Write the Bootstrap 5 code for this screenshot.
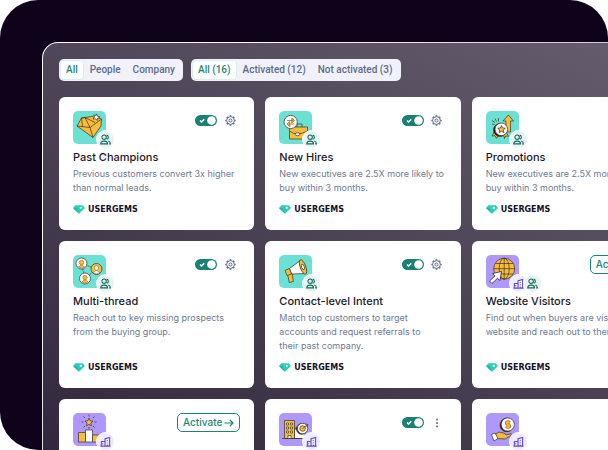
<!DOCTYPE html>
<html lang="en">
<head>
<meta charset="utf-8">
<meta name="viewport" content="width=device-width, initial-scale=1">
<title>UserGems plays</title>
<link href="https://cdn.jsdelivr.net/npm/bootstrap@5.3.0/dist/css/bootstrap.min.css" rel="stylesheet">
<style>
  body { font-family: Inter, "Open Sans", sans-serif; background: #fff; }
  .stage { height: 100vh; background: #0e031b; border-radius: 38px 38px 0 38px; padding: 42px 0 0 42px; }
  /* The board runs past the right and bottom edges of the stage. */
  .board {
    margin-right: -77px; padding: 16px 17px 0 16px; min-height: 0;
    border: 1px solid transparent; border-bottom: 0; border-radius: 16px 16px 0 0;
    background: linear-gradient(27deg, #32283d, #675f6f) padding-box,
                linear-gradient(135deg, #fff 20%, #8b8494) border-box;
  }
  .seg { background: #f1f2f9; border-radius: 5px; padding: 1px 2px 1px 1px; height: 22px; }
  .seg .btn { --bs-btn-padding-x: 5px; --bs-btn-padding-y: 0; --bs-btn-font-size: 10px; --bs-btn-font-weight: 500;
    --bs-btn-font-family: Roboto, sans-serif;
    --bs-btn-line-height: 18px; --bs-btn-border-radius: 4px; --bs-btn-color: #5a6b8c;
    --bs-btn-active-bg: #fff; --bs-btn-active-color: #1b8577; --bs-btn-active-border-color: #d8f0ec; white-space: nowrap; }
  .plays { grid-template-columns: repeat(3, minmax(0, 1fr)); gap: 11px; margin-top: 16px; }
  .play { --bs-card-border-width: 0; --bs-card-border-radius: 6px; padding: 14px 14px 16px; min-height: 133px; }
  .tile { width: 33px; height: 33px; border-radius: 5px; display: block; }
  .teal { background: #6be0d5; }
  .violet { background: #ae98fb; }
  .tags { left: 23px; top: 19px; }
  .tag { width: 19px; height: 19px; border: 1px solid #fff; border-radius: 50%; background: #e7f4f1; color: #14695f; }
  .tag + .tag { margin-left: -5px; }
  .tag.org { background: #f0ecff; color: #6347cc; }
  .controls { height: 19px; gap: 3px; }
  .form-switch .form-check-input.flip {
    width: 22px; height: 11px; margin: 0; border: 0; display: block; float: none; border-radius: 6px; background-color: #cbd2dd;
  }
  .form-switch .form-check-input.flip:checked {
    background-color: #1b8073; background-size: 22px 11px; background-position: 0 0;
    background-image: url("data:image/svg+xml,%3Csvg xmlns='http://www.w3.org/2000/svg' viewBox='0 0 22 11'%3E%3Ccircle cx='16.5' cy='5.5' r='4.3' fill='%23fff'/%3E%3Cpath d='M5 5.5l1.5 1.5L9.300 4.200' fill='none' stroke='%23fff' stroke-width='1.300'/%3E%3C/svg%3E");
  }
  .icon-btn { width: 20px; height: 19px; padding: 0; border: 0; line-height: 0; color: #5b6a86; }
  .go { --bs-btn-color: #1b8577; --bs-btn-border-color: #1b8577; --bs-btn-padding-x: 5px; --bs-btn-padding-y: 0;
    --bs-btn-font-size: 10px; --bs-btn-font-weight: 500; --bs-btn-line-height: 17px; --bs-btn-border-radius: 5px; white-space: nowrap; gap: 2px; }
  .play-title { font-size: 11px; line-height: 16px; font-weight: 500; color: #1b1728; margin: 5px 0 2px; }
  .play-text { font-size: 9px; line-height: 14px; color: #6c7a95; margin: 0 0 10px; }
  .brand { height: 9px; gap: 3px; font: bold 8px/9px "DejaVu Sans", sans-serif; color: #16101f; }
</style>
<script src="https://cdn.jsdelivr.net/npm/bootstrap@5.3.0/dist/js/bootstrap.bundle.min.js"></script>
</head>
<body>
<svg class="d-none" aria-hidden="true">
  <symbol id="people" viewBox="0 0 12 12"><g fill="none" stroke="currentColor" stroke-width="1.200"><circle cx="4.500" cy="3.500" r="2.400"/><path d="M.8 10.800c0-2.200 1.500-3 3.700-3s3.700.8 3.700 3zM7.400 1.200a2.400 2.400 0 0 1 0 4.600M9 7.600c1.500.4 2.300 1.600 2.300 3.200H10"/></g></symbol>
  <symbol id="offices" viewBox="0 0 12 12"><g fill="none" stroke="currentColor" stroke-width="1.200"><path d="M.5 11h11M1.500 11V6H5M5.500 11V3l5-1.500V11M3 8v1"/><path d="M8 4.500v1M8 7v1M8 9.500V11"/></g></symbol>
  <symbol id="gear" viewBox="0 0 11 11"><g fill="none" stroke="currentColor"><circle cx="5.500" cy="5.500" r="3.900"/><circle cx="5.500" cy="5.500" r="1.500"/><path stroke-width="1.700" d="M5.500 .3v1.200M5.500 9.500v1.200M.3 5.500h1.200M9.500 5.500h1.200M1.800 1.800l.9.900M8.300 8.300l.9.900M9.200 1.800l-.9.900M2.700 8.300l-.9.900"/></g></symbol>
  <symbol id="gem" viewBox="0 0 13 9"><path fill="#2bcdbd" d="M2.500 0h8L13 3 6.500 9 0 3z"/><path fill="#1fb5a8" d="M0 3h3.500l3 6z"/><path fill="#fff" d="M7 2.700l1.500-1.500L10 2.700 8.500 4.200z"/></symbol>
</svg>

<main class="stage d-flex flex-column overflow-hidden">
  <section class="board flex-fill">
    <div class="d-flex gap-2">
      <div class="seg d-flex" role="group" aria-label="Audience">
        <button type="button" class="btn active">All</button>
        <button type="button" class="btn">People</button>
        <button type="button" class="btn">Company</button>
      </div>
      <div class="seg d-flex" role="group" aria-label="Status">
        <button type="button" class="btn active">All (16)</button>
        <button type="button" class="btn">Activated (12)</button>
        <button type="button" class="btn">Not activated (3)</button>
      </div>
    </div>

    <div class="plays d-grid">
      <article class="play card">
        <div class="d-flex justify-content-between">
          <div class="position-relative">
            <svg class="tile teal" viewBox="0 0 33 33"><g stroke="#3a3020" stroke-width=".7" stroke-linejoin="round"><path fill="#fbbc3c" d="M4 15l4.500-8L19 5.500 28.500 8 28 15l-8 11.500z"/><path fill="none" d="M4 15l13 1.500L28.500 8M17 16.500l3 10M17 16.500L12 6.500 8.500 7l1 8.500M12 6.500l10 5"/><path fill="#fff" d="M23.500 3l1 2.200 2.500.8-2.200 1.200-.5 2.300-1.600-1.700-2.700.2 1.600-2-.8-2.300 2 1z"/></g></svg>
            <div class="tags position-absolute d-flex"><span class="tag d-flex align-items-center justify-content-center"><svg width="11" height="11"><use href="#people"/></svg></span></div>
          </div>
          <div class="controls d-flex align-items-center"><div class="form-switch p-0 m-0"><input class="form-check-input flip" type="checkbox" role="switch" checked aria-label="Past Champions active"></div><button type="button" class="btn icon-btn" aria-label="Settings"><svg width="11" height="11"><use href="#gear"/></svg></button></div>
        </div>
        <h2 class="play-title">Past Champions</h2>
        <p class="play-text">Previous customers convert 3x higher than normal leads.</p>
        <div class="brand d-flex align-items-center mt-auto"><svg width="12" height="9"><use href="#gem"/></svg>USERGEMS</div>
      </article>

      <article class="play card">
        <div class="d-flex justify-content-between">
          <div class="position-relative">
            <svg class="tile teal" viewBox="0 0 33 33"><g stroke="#3a3020" stroke-width=".7" stroke-linejoin="round"><path fill="none" d="M18 16v-3h5v3"/><path fill="#fbbc3c" d="M10.500 16h18v12h-18z"/><path fill="none" d="M10.500 20q4 3 8 3t10-3"/><ellipse cx="18.500" cy="23.200" rx="2.300" ry="1.500" fill="#fff"/><circle cx="11.700" cy="11" r="6.600" fill="#fff"/></g><path d="M8 9.500h5.500M15.500 9.500L12.800 7v5zM15.500 13H10M8 13l2.700-2.500v5z" fill="#fbbc3c" stroke="#7a5a1c" stroke-width=".7"/></svg>
            <div class="tags position-absolute d-flex"><span class="tag d-flex align-items-center justify-content-center"><svg width="11" height="11"><use href="#people"/></svg></span></div>
          </div>
          <div class="controls d-flex align-items-center"><div class="form-switch p-0 m-0"><input class="form-check-input flip" type="checkbox" role="switch" checked aria-label="New Hires active"></div><button type="button" class="btn icon-btn" aria-label="Settings"><svg width="11" height="11"><use href="#gear"/></svg></button></div>
        </div>
        <h2 class="play-title">New Hires</h2>
        <p class="play-text">New executives are 2.5X more likely to buy within 3 months.</p>
        <div class="brand d-flex align-items-center mt-auto"><svg width="12" height="9"><use href="#gem"/></svg>USERGEMS</div>
      </article>

      <article class="play card">
        <div class="d-flex justify-content-between">
          <div class="position-relative">
            <svg class="tile teal" viewBox="0 0 33 33"><g stroke="#3a3020" stroke-width=".7" stroke-linejoin="round"><path fill="#fbbc3c" d="M22.500 4l5 6h-3v11h-4.500V10h-3z"/><path fill="#fbbc3c" d="M9 20l-3 5 3-.3 1.500 2.600L14 22zM17 22l1.500 5.500 1.200-2.500 2.800.3-3-5z"/><circle cx="14" cy="19" r="6.500" fill="#1c1820"/><circle cx="15.300" cy="18.300" r="6.300" fill="#fff"/><path fill="#fbbc3c" d="M15.500 14.500l1.100 2.500 2.700.2-2 1.800.6 2.700-2.400-1.400-2.300 1.400.5-2.700-2-1.800 2.700-.2z"/><path fill="none" d="M6 9.500l3 2M9 7.500l1.500 3M12.500 7v3.500M6 13l2.500.5"/></g></svg>
            <div class="tags position-absolute d-flex"><span class="tag d-flex align-items-center justify-content-center"><svg width="11" height="11"><use href="#people"/></svg></span></div>
          </div>
        </div>
        <h2 class="play-title">Promotions</h2>
        <p class="play-text">New executives are 2.5X more likely to buy within 3 months.</p>
        <div class="brand d-flex align-items-center mt-auto"><svg width="12" height="9"><use href="#gem"/></svg>USERGEMS</div>
      </article>

      <article class="play card">
        <div class="d-flex justify-content-between">
          <div class="position-relative">
            <svg class="tile teal" viewBox="0 0 33 33"><g stroke="#3a3020" stroke-width=".7"><path fill="none" stroke-dasharray="1.500 .8" d="M8.500 8.500l15 5.500-11.500 9.500z"/><circle cx="8.500" cy="8.500" r="5.500" fill="#fff"/><circle cx="23.500" cy="14" r="5.500" fill="#fbbc3c"/><circle cx="12" cy="23.500" r="5.500" fill="#fff"/></g><g fill="#fbbc3c" stroke="#7a5a1c" stroke-width=".5"><circle cx="8.500" cy="7.500" r="2.200"/><path d="M5.500 12q3-4 6 0-3 2.500-6 0z"/><circle cx="12" cy="22.500" r="2.200"/><path d="M9 27q3-4 6 0-3 2.500-6 0z"/><g fill="#fff"><circle cx="23.500" cy="13" r="2.200"/><path d="M20.500 17.500q3-4 6 0-3 2.500-6 0z"/></g></g></svg>
            <div class="tags position-absolute d-flex"><span class="tag d-flex align-items-center justify-content-center"><svg width="11" height="11"><use href="#people"/></svg></span></div>
          </div>
          <div class="controls d-flex align-items-center"><div class="form-switch p-0 m-0"><input class="form-check-input flip" type="checkbox" role="switch" checked aria-label="Multi-thread active"></div><button type="button" class="btn icon-btn" aria-label="Settings"><svg width="11" height="11"><use href="#gear"/></svg></button></div>
        </div>
        <h2 class="play-title">Multi-thread</h2>
        <p class="play-text">Reach out to key missing prospects from the buying group.</p>
        <div class="brand d-flex align-items-center mt-auto"><svg width="12" height="9"><use href="#gem"/></svg>USERGEMS</div>
      </article>

      <article class="play card">
        <div class="d-flex justify-content-between">
          <div class="position-relative">
            <svg class="tile teal" viewBox="0 0 33 33"><g stroke="#3a3020" stroke-width=".7" stroke-linejoin="round"><path fill="#fbbc3c" d="M8.500 19l4.500-1 1.300 8.500-4 1z"/><path fill="#fff" d="M10.500 13.500L22 5l5 13.500-14.500.5z"/><path fill="#fbbc3c" d="M6 15.500l4.500-2 2 5.500-4.500 1.500z"/><ellipse cx="24" cy="12" rx="2.800" ry="7.600" transform="rotate(-20 24 12)" fill="#fbbc3c"/><ellipse cx="24" cy="12" rx="1.300" ry="3" transform="rotate(-20 24 12)" fill="#fff"/></g></svg>
            <div class="tags position-absolute d-flex"><span class="tag d-flex align-items-center justify-content-center"><svg width="11" height="11"><use href="#people"/></svg></span></div>
          </div>
          <div class="controls d-flex align-items-center"><div class="form-switch p-0 m-0"><input class="form-check-input flip" type="checkbox" role="switch" checked aria-label="Contact-level Intent active"></div><button type="button" class="btn icon-btn" aria-label="Settings"><svg width="11" height="11"><use href="#gear"/></svg></button></div>
        </div>
        <h2 class="play-title">Contact-level Intent</h2>
        <p class="play-text">Match top customers to target accounts and request referrals to their&nbsp;past company.</p>
        <div class="brand d-flex align-items-center mt-auto"><svg width="12" height="9"><use href="#gem"/></svg>USERGEMS</div>
      </article>

      <article class="play card">
        <div class="d-flex justify-content-between">
          <div class="position-relative">
            <svg class="tile violet" viewBox="0 0 33 33"><g fill="none" stroke="#3a3020" stroke-width=".7"><circle cx="18.200" cy="13.700" r="10.500" fill="#fbbc3c"/><ellipse cx="18.200" cy="13.700" rx="5" ry="10.500"/><path d="M18.200 3.200v21M7.700 13.700h21M9.500 8.500h17.400M9.500 19h17.400"/></g><path fill="#fff" stroke="#2a2433" stroke-width=".8" d="M15.500 16.500l-1.500 9-2.500-2.200L6 28.500 3.500 26l5.500-5-2.500-2.500z"/></svg>
            <div class="tags position-absolute d-flex"><span class="tag org d-flex align-items-center justify-content-center"><svg width="11" height="11"><use href="#offices"/></svg></span><span class="tag d-flex align-items-center justify-content-center"><svg width="11" height="11"><use href="#people"/></svg></span></div>
          </div>
          <div class="controls d-flex"><button type="button" class="btn go d-flex align-items-center">Activate<svg width="10" height="8" viewBox="0 0 10 8" fill="none" stroke="currentColor" stroke-width="1.200"><path d="M.5 4h8.500M6 1l3 3-3 3"/></svg></button></div>
        </div>
        <h2 class="play-title">Website Visitors</h2>
        <p class="play-text">Find out when buyers are visiting your website and reach out to them.</p>
        <div class="brand d-flex align-items-center mt-auto"><svg width="12" height="9"><use href="#gem"/></svg>USERGEMS</div>
      </article>

      <article class="play card">
        <div class="d-flex justify-content-between">
          <div class="position-relative">
            <svg class="tile violet" viewBox="0 0 33 33"><g stroke="#3a3020" stroke-width=".7"><path fill="#fbbc3c" d="M5.500 19.500h7V29h-7zM19.500 22H27v7h-7.500z"/><path fill="#fff" d="M12.500 17h7v12h-7z"/><path fill="#fbbc3c" d="M16 5.200l1.200 2.600 2.800.3-2.100 1.900.6 2.800-2.500-1.400-2.500 1.400.6-2.800L12 8.100l2.800-.3z"/><path fill="none" d="M16 1.500v2M10.500 3.500l1.500 1.500M21.500 3.500L20 5M8.500 9h2M21.500 9h2M10.500 14.500l1.500-1.500M21.500 14.500L20 13M16 14v2"/></g></svg>
            <div class="tags position-absolute d-flex"><span class="tag org d-flex align-items-center justify-content-center"><svg width="11" height="11"><use href="#offices"/></svg></span></div>
          </div>
          <div class="controls d-flex"><button type="button" class="btn go d-flex align-items-center">Activate<svg width="10" height="8" viewBox="0 0 10 8" fill="none" stroke="currentColor" stroke-width="1.200"><path d="M.5 4h8.500M6 1l3 3-3 3"/></svg></button></div>
        </div>
      </article>

      <article class="play card">
        <div class="d-flex justify-content-between">
          <div class="position-relative">
            <svg class="tile violet" viewBox="0 0 33 33"><g stroke="#3a3020" stroke-width=".7"><path fill="#fff" d="M15.500 16H26v9.500H15.500z"/><path fill="#fbbc3c" d="M5.500 7.500h10v18h-10z"/><path fill="none" d="M3 25.500h25M15.500 15h3"/><path fill="#fff" d="M7.500 10h2v2h-2zM11.500 10h2v2h-2zM7.500 14h2v2h-2zM11.500 14h2v2h-2zM7.500 18h2v2h-2zM11.500 18h2v2h-2zM9 22.500h3v3H9z"/><circle cx="22.800" cy="16" r="5.300" fill="#1c1820"/><circle cx="23.600" cy="15.500" r="5.200" fill="#fff"/><circle cx="23.600" cy="15.500" r="2.800" fill="#fbbc3c"/><path d="M23.600 15.500l4.500-3.500M26 11l3 .5-1.200 2.500" fill="#fbbc3c"/></g></svg>
            <div class="tags position-absolute d-flex"><span class="tag org d-flex align-items-center justify-content-center"><svg width="11" height="11"><use href="#offices"/></svg></span></div>
          </div>
          <div class="controls d-flex align-items-center"><div class="form-switch p-0 m-0"><input class="form-check-input flip" type="checkbox" role="switch" checked aria-label="Play active"></div><button type="button" class="btn icon-btn" aria-label="More"><svg width="10" height="10" viewBox="0 0 10 10" fill="currentColor"><circle cx="5" cy="1.500" r="1"/><circle cx="5" cy="5" r="1"/><circle cx="5" cy="8.500" r="1"/></svg></button></div>
        </div>
      </article>

      <article class="play card">
        <div class="d-flex justify-content-between">
          <div class="position-relative">
            <svg class="tile violet" viewBox="0 0 33 33"><g stroke="#3a3020" stroke-width=".7" stroke-linejoin="round"><circle cx="20.800" cy="12" r="6.800" fill="#1c1820"/><circle cx="21.800" cy="11.500" r="6.600" fill="#fff"/><path fill="none" stroke="#7a5a1c" stroke-width="2.400" d="M24 9.500q-2.300-1.500-4 0 0 1.700 2 2t2 2q-2 1.600-4.200 0M22 7.300v8.500"/><path fill="none" stroke="#fbbc3c" stroke-width="1.300" d="M24 9.500q-2.300-1.500-4 0 0 1.700 2 2t2 2q-2 1.600-4.200 0M22 7.300v8.500"/><path fill="#fbbc3c" d="M9 21.500l4-2.500 6 1.500 1 1.500 5-1.500q1 1-1 2.500l-5 3-8-.5z"/><path fill="#fff" d="M5.500 21.500l3.500-1.500 3 5.500-4 2.500z"/></g></svg>
            <div class="tags position-absolute d-flex"><span class="tag org d-flex align-items-center justify-content-center"><svg width="11" height="11"><use href="#offices"/></svg></span></div>
          </div>
        </div>
      </article>
    </div>
  </section>
</main>
</body>
</html>
